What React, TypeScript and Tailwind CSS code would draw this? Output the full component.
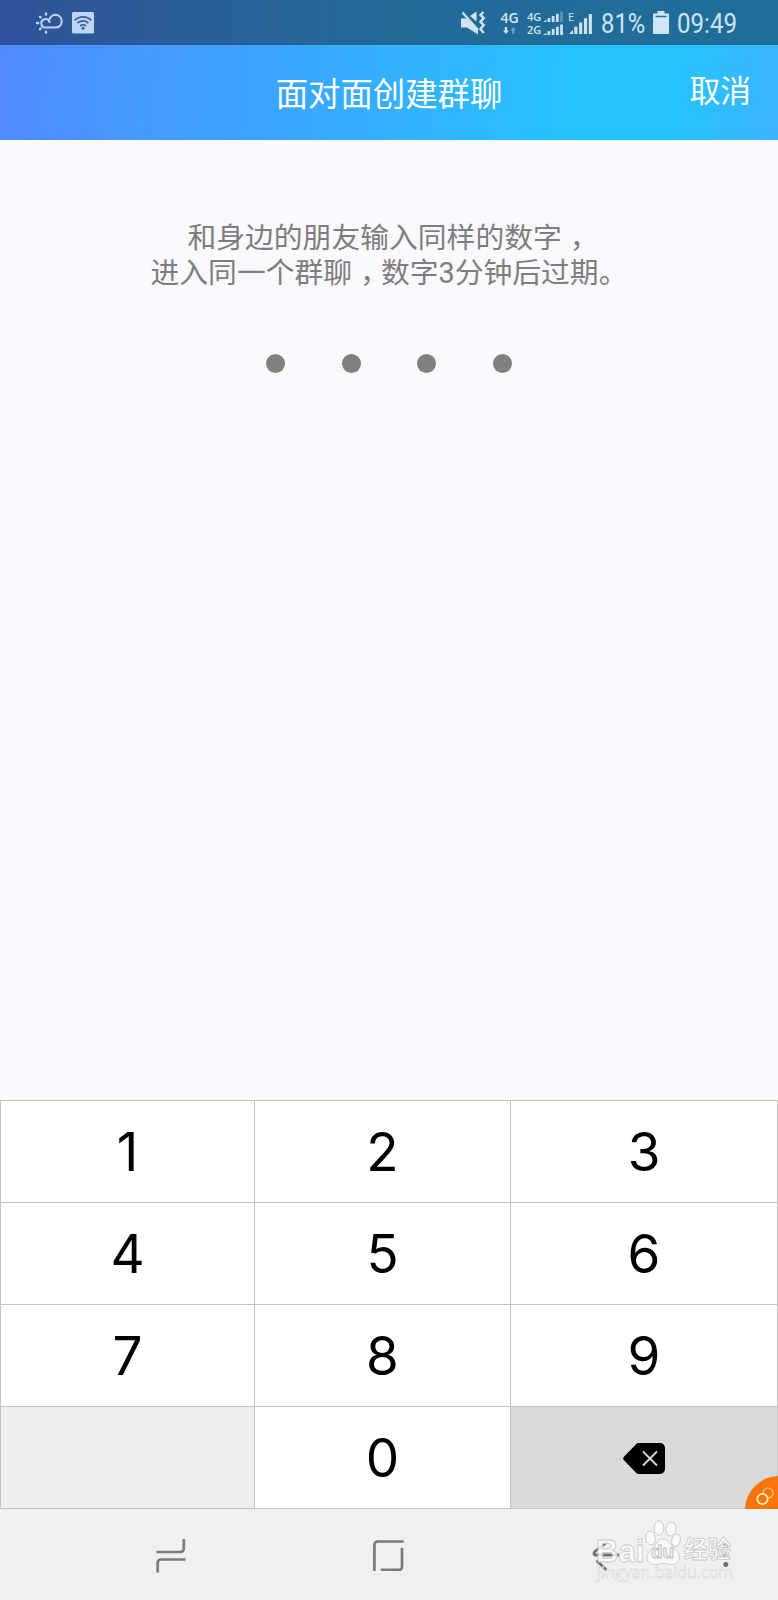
import type { ReactNode } from "react";

const keys = ["1", "2", "3", "4", "5", "6", "7", "8", "9"];

const Key = ({ children, className = "" }: { children?: ReactNode; className?: string }) => (
  <button
    className={`flex items-center justify-center border-r border-b border-[#c4c4c4] pt-[2px] font-['Inter'] text-[53px] leading-none font-normal text-black ${className}`}
  >
    {children}
  </button>
);

const Signal = ({ className, bars = 5 }: { className: string; bars?: number }) => (
  <svg viewBox="0 0 20 20" preserveAspectRatio="none" className={className} fill="#cfe6f2">
    <path d="M0 20 L3.5 16V20Z" />
    {[4.6, 8.8, 13, 17.2].map((x, i) => (
      <rect key={x} x={x} y={13 - i * 4} width="2.7" height={7 + i * 4} opacity={i < bars - 1 ? 1 : 0.35} />
    ))}
  </svg>
);

const StatusBar = () => (
  <div className="flex h-[45px] items-center bg-linear-to-r from-[#30529b] via-[#236a97] to-[#206e9a] pl-[35px] pr-[41px] text-[#cfe6f2]">
    <svg width="29" height="22" viewBox="0 0 29 22" fill="none" stroke="#bfd5f2" strokeWidth="2.1" strokeLinecap="round">
      <path d="M10.5 15.5H20.5a6.3 6.3 0 1 0-6-8.5M10.5 15.5a4.2 4.2 0 1 1 4-5.5" />
      <path d="M11 1.5v1M5 4.8l.6.6M2 11h1.2M5 17.2l.6-.6M11 19.8v.7" strokeWidth="2.4" />
    </svg>
    <svg width="23" height="22" viewBox="0 0 23 22" className="ml-2">
      <rect width="22" height="21.5" rx="1.5" fill="#bfd5f2" />
      <g fill="none" stroke="#33609f" strokeWidth="1.8">
        <path d="M2.8 8.3a11.5 11.5 0 0 1 16.4 0M5.5 11.2a7.8 7.8 0 0 1 11 0M8.1 14a4.2 4.2 0 0 1 5.8 0" />
      </g>
      <circle cx="11" cy="16.2" r="1.5" fill="#33609f" />
    </svg>

    <div className="ml-auto flex items-center">
      <svg width="25" height="24" viewBox="0 0 25 24" fill="#cfe6f2">
        <path d="M0 7.5h5.5L17 19.5v4L6 16.5H0zM9 5l6.5-4.5v10z" />
        <path d="M1.5 1.5L17 19" stroke="#cfe6f2" strokeWidth="2.2" />
        <path d="M22.5 1l-3 3 3.2 3-3.2 4 3.2 3-3.2 4 3.2 4" fill="none" stroke="#cfe6f2" strokeWidth="2.4" />
      </svg>
      <div className="ml-[14px] flex w-[19px] flex-col items-center font-['Open_Sans'] text-[14px] leading-[14px] font-semibold">
        4G
        <svg width="13" height="7" viewBox="0 0 13 7" className="mt-[2px]" fill="#cfe6f2">
          <path d="M1.8 0H4v3.5h2L2.9 7 0 3.5h1.8z" />
          <path d="M9.2 7h2V3.5H13L10.2 0 7.5 3.5h1.7z" opacity="0.45" />
        </svg>
      </div>
      <div className="ml-[8px] flex flex-col gap-[2px] font-['Open_Sans'] text-[11px] leading-[11px] font-semibold">
        <div className="flex items-end">
          <span className="w-[16px]">4G</span>
          <Signal className="h-[11px] w-[20px]" bars={4} />
        </div>
        <div className="flex items-end">
          <span className="w-[16px]">2G</span>
          <Signal className="h-[11px] w-[20px]" />
        </div>
      </div>
      <div className="relative ml-[6px] flex h-[22px] w-[24px] items-end">
        <span className="absolute -top-[1px] -left-[1px] font-['Open_Sans'] text-[11px] leading-[11px] font-medium">E</span>
        <Signal className="h-[21px] w-[23px]" />
      </div>
      <span className="ml-[8px] w-[44px] origin-left scale-x-[0.85] pt-[2px] font-['Roboto'] text-[28px] leading-none whitespace-nowrap">81%</span>
      <svg width="16" height="23" viewBox="0 0 16 23" className="ml-2" fill="#cfe6f2">
        <path d="M4.5 0h7v2.5H16V23H0V2.5h4.5z" />
        <path d="M2.5 5.5h11" stroke="#23709a" strokeWidth="1.5" />
      </svg>
      <span className="ml-2 w-[60px] origin-left scale-x-[0.86] pt-[2px] font-['Roboto'] text-[28px] leading-none whitespace-nowrap">09:49</span>
    </div>
  </div>
);

const Header = () => (
  <header className="relative flex h-[95px] items-center justify-center bg-[linear-gradient(96deg,#5089fe_0%,#459aff_18%,#3aa5ff_36%,#30b6ff_58%,#26c3fe_75%,#26c3fe_86%,#3cb4ff_100%)] text-white">
    <h1 className="pt-[5px] text-[32.4px] leading-none">面对面创建群聊</h1>
    <button className="absolute top-[32px] right-[27px] text-[30.8px] leading-none">取消</button>
  </header>
);

// Half-width comma padded back to a full cell, so it sits nearer the middle
const Comma = () => <span className="inline-block w-[28.8px] pl-[8px] text-left [font-feature-settings:'halt']">，</span>;

const Watermark = () => (
  <div className="pointer-events-none absolute top-[5px] left-[594px] h-[80px] w-[142px] font-['Open_Sans'] text-white/80">
    <span className="absolute top-[26px] left-[2px] font-['Liberation_Sans'] text-[31px] leading-[24px] font-bold [-webkit-text-stroke:0.8px_#c8c8c8]">Bai</span>
    <svg width="36" height="46" viewBox="0 0 36 46" className="absolute top-[6px] left-[51px]" fill="#fafafa" fillOpacity="0.92" stroke="#c8c8c8" strokeWidth="0.9">
      <ellipse cx="5.5" cy="18" rx="4.8" ry="7" transform="rotate(-8 5.5 18)" />
      <ellipse cx="14" cy="8" rx="4.8" ry="7.2" />
      <ellipse cx="26" cy="9" rx="5" ry="7" transform="rotate(10 26 9)" />
      <ellipse cx="31" cy="20.5" rx="4.3" ry="6.3" transform="rotate(16 31 20.5)" />
      <path d="M18 19c-4 0-6 3-8.5 7C7 30 2 32 2 37.5S6 44.5 10 44.5s5-1 8.500-1 5 1 8.500 1 7.500-2 7.500-7-4-7-7-11-5.500-7.500-9.500-7.500z" />
    </svg>
    <span className="absolute top-[27px] left-[57px] font-['Liberation_Sans'] text-[19px] leading-[22px] font-bold text-[#f4f4f4] [-webkit-text-stroke:0.8px_#b8b8b8]">du</span>
    <span className="absolute top-[22px] left-[90px] font-['Noto_Sans_CJK_SC'] text-[23.5px] leading-[24px] font-bold whitespace-nowrap [-webkit-text-stroke:0.8px_#c8c8c8]">经验</span>
    <span className="absolute top-[50px] left-[3px] text-[16px] leading-[17px] whitespace-nowrap [-webkit-text-stroke:0.5px_#d0d0d0]">jingyan.baidu.com</span>
  </div>
);

const NavBar = () => (
  <nav className="relative h-[91px] bg-[#f0f0f0]">
    <div className="flex h-full items-center pl-[155px]">
      <svg width="32" height="36" viewBox="0 0 32 36" fill="none" stroke="#7b7b7b" strokeWidth="2.7">
        <path d="M1.5 15h24a3.3 3.3 0 0 0 3.3-3.3V2M30.5 22.5H6A3.3 3.3 0 0 0 2.7 25.8V35.5" />
      </svg>
      <svg width="32" height="32" viewBox="0 0 32 32" className="ml-[185px]" fill="none" stroke="#7b7b7b" strokeWidth="2.7">
        <path d="M2.4 32V6a3.5 3.5 0 0 1 3.5-3.5h25.8M30 8.8V27.8a3 3 0 0 1-3 3H8.7" />
      </svg>
      <svg width="28" height="32" viewBox="0 0 28 32" className="ml-[188px]" fill="none" stroke="#6f6f6f" strokeWidth="2.8">
        <path d="M15 3L3 12.5Q.8 14.5 3 16H27M4.5 21.5L15 31.5" />
      </svg>
      <svg width="6" height="30" viewBox="0 0 6 30" className="ml-[103px]" fill="#6f6f6f">
        <circle cx="2.8" cy="5.5" r="2.5" />
        <circle cx="2.8" cy="15" r="2.5" />
        <circle cx="2.8" cy="24.5" r="2.5" />
      </svg>
    </div>
    <Watermark />
  </nav>
);

const App = () => {
  return (
    <div className="flex h-[1600px] w-[778px] flex-col overflow-hidden bg-[#f9f9fe] font-['Roboto','Noto_Sans_CJK_SC',sans-serif]">
      <StatusBar />
      <Header />

      <main className="flex flex-1 flex-col items-center pt-[81px]">
        <p className="text-center text-[28.8px] leading-[35.3px] text-[#7e7e7e]">
          和身边的朋友输入同样的数字<Comma />
          <br />
          进入同一个群聊<Comma />数字3分钟后过期。
        </p>
        <div className="mt-[62px] flex gap-[56.7px]">
          {[0, 1, 2, 3].map((i) => (
            <span key={i} className="size-[19px] rounded-full bg-[#808080]" />
          ))}
        </div>
      </main>

      <div className="relative grid h-[409px] grid-cols-[254px_256px_1fr] grid-rows-4 overflow-hidden border-t border-l border-[#c4c4c4]">
        {keys.map((k) => (
          <Key key={k} className="bg-white">{k}</Key>
        ))}
        <Key className="bg-[#eeeeee]" />
        <Key className="bg-white">0</Key>
        <Key className="bg-[#dadada]">
          <svg width="42" height="31" viewBox="0 0 42 31">
            <path d="M16 0H37a5 5 0 0 1 5 5V26a5 5 0 0 1-5 5H16a4 4 0 0 1-3-1.3L1 17.3a2.6 2.6 0 0 1 0-3.6L13 1.3A4 4 0 0 1 16 0z" fill="#000" />
            <path d="M20 8.5L34 22.5M34 8.5L20 22.5" stroke="#dadada" strokeWidth="1.8" />
          </svg>
        </Key>
        <div className="absolute right-[-35px] bottom-[-35px] size-[68px] rounded-full bg-[#fb740c]">
          <svg width="19" height="19" viewBox="0 0 19 19" className="absolute top-[11px] left-[11px]" fill="none" stroke="#fff0b8">
            <circle cx="12" cy="6" r="5" strokeWidth="1.2" opacity="0.7" />
            <circle cx="6.5" cy="12" r="5.2" strokeWidth="1.8" fill="#fb740c" />
          </svg>
        </div>
      </div>

      <NavBar />
    </div>
  );
};

export default App;
